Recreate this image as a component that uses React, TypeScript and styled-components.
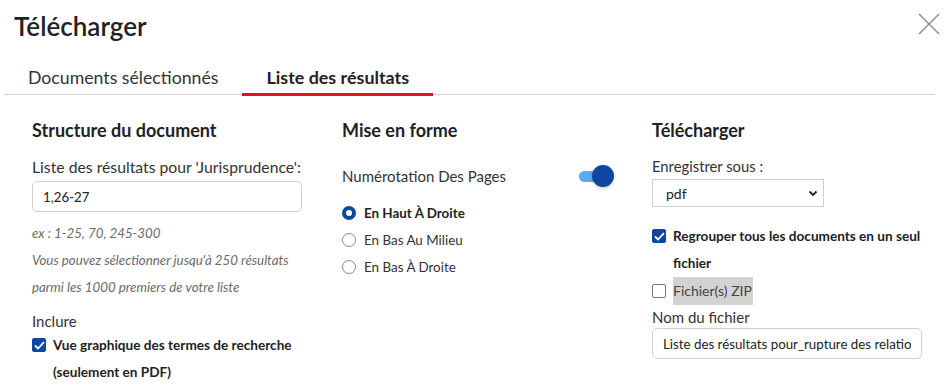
import React from "react";
import styled, { createGlobalStyle } from "styled-components";

const Global = createGlobalStyle`
  html, body { margin: 0; padding: 0; background: #fff; }
  body { font-family: Lato, "Open Sans", sans-serif; color: #333; }
  * { box-sizing: border-box; }
`;

const Dialog = styled.div`
  width: 945px;
  height: 392px;
  overflow: hidden;
  background: #fff;
`;

const Header = styled.div`
  height: 62px;
  display: flex;
  justify-content: space-between;
  align-items: flex-start;
  padding: 11px 5px 0 14px;
`;

const Title = styled.h1`
  margin: 0;
  font-size: 26px;
  line-height: 30px;
  font-weight: 600;
  color: #222;
`;

const CloseBtn = styled.button`
  border: 0;
  background: none;
  padding: 0;
  margin-top: 2px;
  width: 22px;
  height: 22px;
  cursor: pointer;
`;

const Tabs = styled.div`
  display: flex;
  margin: 0 10px 0 4px;
  height: 33px;
  border-bottom: 1px solid #d2d2d2;
`;

const Tab = styled.div<{ $active?: boolean }>`
  height: 34px;
  margin-bottom: -2px;
  padding: 0 24px;
  font-size: ${(p) => (p.$active ? 17.9 : 17.7)}px;
  line-height: 31px;
  font-weight: ${(p) => (p.$active ? 700 : 400)};
  color: ${(p) => (p.$active ? "#222" : "#333")};
  border-bottom: 3px solid ${(p) => (p.$active ? "#e3101e" : "transparent")};
`;

const Columns = styled.div`
  display: grid;
  grid-template-columns: 310px 310px 310px;
  padding: 24px 0 0 32px;
`;

const Column = styled.div`
  display: flex;
  flex-direction: column;
  align-items: flex-start;
`;

const H3 = styled.h3`
  margin: 0;
  font-size: 18px;
  line-height: 22px;
  font-weight: 700;
  color: #222;
`;

const Label = styled.div<{ $mt: number; $size?: number }>`
  margin-top: ${(p) => p.$mt}px;
  font-size: ${(p) => p.$size ?? 15}px;
  line-height: 20px;
  color: #333;
`;

const TextInput = styled.input<{ $w: number; $h: number; $mt: number }>`
  margin-top: ${(p) => p.$mt}px;
  width: ${(p) => p.$w}px;
  height: ${(p) => p.$h}px;
  border: 1px solid #cfcfcf;
  border-radius: 5px;
  padding: 0 10px;
  font-family: Lato, sans-serif;
  font-size: 13.3px;
  color: #222;
  background: #fff;
  outline: none;
`;

const Help = styled.div`
  margin-top: 8px;
  font-size: 13.3px;
  font-style: italic;
  line-height: 27px;
  color: #6a6a6a;
`;

const CheckRow = styled.div<{ $mt: number }>`
  margin-top: ${(p) => p.$mt}px;
  display: flex;
  align-items: flex-start;
  gap: 7px;
`;

const Box = styled.span<{ $checked?: boolean; $top?: number }>`
  flex: none;
  width: 14px;
  height: 14px;
  margin-top: ${(p) => p.$top ?? 6}px;
  border-radius: 2px;
  display: flex;
  align-items: center;
  justify-content: center;
  background: ${(p) => (p.$checked ? "#0d47a1" : "#fff")};
  border: 1px solid ${(p) => (p.$checked ? "#0d47a1" : "#777")};
`;

const CheckText = styled.span`
  font-size: 13.6px;
  line-height: 27px;
  font-weight: 700;
  color: #222;
`;

const ZipRow = styled.div`
  display: flex;
  align-items: center;
  gap: 7px;
  height: 28px;
`;

const Highlight = styled.span`
  background: #d3d3d3;
  font-size: 14px;
  line-height: 28px;
  color: #444;
  padding: 0 1px 0 0;
`;

const ToggleRow = styled.div`
  margin-top: 23px;
  width: 272px;
  height: 24px;
  display: flex;
  align-items: center;
  justify-content: space-between;
  font-size: 15px;
  color: #333;
`;

const Switch = styled.span`
  position: relative;
  width: 35px;
  height: 22px;
  display: inline-block;
`;

const Track = styled.span`
  position: absolute;
  left: 0;
  top: 6px;
  width: 28px;
  height: 11px;
  border-radius: 6px;
  background: #5aaaf2;
`;

const Knob = styled.span`
  position: absolute;
  right: 0;
  top: 0;
  width: 22px;
  height: 22px;
  border-radius: 50%;
  background: #0d47a1;
  box-shadow: 0 1px 3px rgba(0, 0, 0, 0.25);
`;

const Radios = styled.div`
  margin-top: 11px;
  display: flex;
  flex-direction: column;
`;

const RadioRow = styled.div`
  display: flex;
  align-items: center;
  gap: 8px;
  height: 27px;
`;

const RadioDot = styled.span<{ $checked?: boolean }>`
  width: 14px;
  height: 14px;
  border-radius: 50%;
  border: ${(p) => (p.$checked ? "4px solid #0d47a1" : "1px solid #888")};
  background: #fff;
`;

const RadioLabel = styled.span<{ $bold?: boolean }>`
  font-size: 13.4px;
  font-weight: ${(p) => (p.$bold ? 700 : 400)};
  color: ${(p) => (p.$bold ? "#222" : "#333")};
`;

const Select = styled.div`
  margin-top: 3px;
  width: 172px;
  height: 28px;
  border: 1px solid #cfcfcf;
  display: flex;
  align-items: center;
  justify-content: space-between;
  padding: 0 4px 0 13px;
  font-size: 14px;
  color: #222;
`;

const Check = () => (
  <svg width="11" height="9" viewBox="0 0 11 9">
    <path d="M1 4.5 L4 7.5 L10 1.2" fill="none" stroke="#fff" strokeWidth="1.8" />
  </svg>
);

export default function App() {
  return (
    <Dialog>
      <Global />
      <Header>
        <Title>Télécharger</Title>
        <CloseBtn aria-label="Fermer">
          <svg width="22" height="22" viewBox="0 0 22 22">
            <path d="M1 1 L21 21 M21 1 L1 21" stroke="#8a8a8a" strokeWidth="1.4" />
          </svg>
        </CloseBtn>
      </Header>
      <Tabs>
        <Tab>Documents sélectionnés</Tab>
        <Tab $active>Liste des résultats</Tab>
      </Tabs>
      <Columns>
        <Column>
          <H3>Structure du document</H3>
          <Label $mt={16} $size={15.75}>Liste des résultats pour 'Jurisprudence':</Label>
          <TextInput $mt={4} $w={270} $h={31} value="1,26-27" readOnly />
          <Help>
            ex : 1-25, 70, 245-300
            <br />
            Vous pouvez sélectionner jusqu'à 250 résultats
            <br />
            parmi les 1000 premiers de votre liste
          </Help>
          <Label $mt={10}>Inclure</Label>
          <CheckRow $mt={1}>
            <Box $checked>
              <Check />
            </Box>
            <CheckText>
              Vue graphique des termes de recherche
              <br />
              (seulement en PDF)
            </CheckText>
          </CheckRow>
        </Column>
        <Column>
          <H3>Mise en forme</H3>
          <ToggleRow>
            <span>Numérotation Des Pages</span>
            <Switch>
              <Track />
              <Knob />
            </Switch>
          </ToggleRow>
          <Radios>
            <RadioRow>
              <RadioDot $checked />
              <RadioLabel $bold>En Haut À Droite</RadioLabel>
            </RadioRow>
            <RadioRow>
              <RadioDot />
              <RadioLabel>En Bas Au Milieu</RadioLabel>
            </RadioRow>
            <RadioRow>
              <RadioDot />
              <RadioLabel>En Bas À Droite</RadioLabel>
            </RadioRow>
          </Radios>
        </Column>
        <Column>
          <H3>Télécharger</H3>
          <Label $mt={15} $size={14.8}>Enregistrer sous :</Label>
          <Select>
            <span>pdf</span>
            <svg width="12" height="12" viewBox="0 0 12 12">
              <path d="M2.5 4.5 L6 8 L9.5 4.5" fill="none" stroke="#222" strokeWidth="1.8" />
            </svg>
          </Select>
          <CheckRow $mt={16}>
            <Box $checked>
              <Check />
            </Box>
            <CheckText>
              Regrouper tous les documents en un seul
              <br />
              fichier
            </CheckText>
          </CheckRow>
          <ZipRow>
            <Box $top={0} />
            <Highlight>Fichier(s) ZIP</Highlight>
          </ZipRow>
          <Label $mt={2}>Nom du fichier</Label>
          <TextInput
            $mt={1}
            $w={270}
            $h={31}
            value="Liste des résultats pour_rupture des relations commerciales"
            readOnly
          />
        </Column>
      </Columns>
    </Dialog>
  );
}
